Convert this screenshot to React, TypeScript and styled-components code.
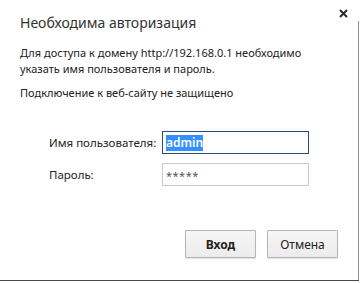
import React from 'react';
import styled, { createGlobalStyle } from 'styled-components';

const GlobalStyle = createGlobalStyle`
  html, body {
    margin: 0;
    padding: 0;
    background: #fff;
  }
  body {
    font-family: 'Noto Sans', 'Open Sans', sans-serif;
    color: #222;
  }
`;

const App: React.FC = () => {
  return (
    <>
      <GlobalStyle />
      <Dialog>
        <Header>
          <Title>Необходима авторизация</Title>
          <Close aria-label="Закрыть">
            <svg width="9" height="9" viewBox="0 0 9 9">
              <path d="M1 1L8 8M8 1L1 8" stroke="#2b2b2b" strokeWidth="2" />
            </svg>
          </Close>
        </Header>

        <Message>
          Для доступа к домену http://192.168.0.1 необходимо
          <br />
          указать имя пользователя и пароль.
        </Message>
        <Warning>Подключение к веб-сайту не защищено</Warning>

        <Form>
          <Label>Имя пользователя:</Label>
          <Field focused>
            <Selected>admin</Selected>
          </Field>
          <Label>Пароль:</Label>
          <Field>
            <Mask>*****</Mask>
          </Field>
        </Form>

        <Actions>
          <Button primary>Вход</Button>
          <Button>Отмена</Button>
        </Actions>
      </Dialog>
    </>
  );
};

export default App;

const Dialog = styled.div`
  box-sizing: border-box;
  width: 359px;
  height: 281px;
  padding: 0 20px;
  border-bottom: 1px solid #4a4a4a;
  background: linear-gradient(to bottom, #fff 21px, #8c8c8c 21px) right top / 1px 100% no-repeat,
    #fff;
  display: flex;
  flex-direction: column;
`;

const Header = styled.div`
  display: flex;
  justify-content: space-between;
  align-items: flex-start;
`;

const Title = styled.h1`
  margin: 13px 0 0;
  font-size: 14px;
  line-height: 20px;
  font-weight: 400;
  color: #333;
`;

const Close = styled.div`
  margin: 9px -9px 0 0;
  width: 9px;
  height: 9px;
  display: flex;
`;

const Message = styled.p`
  margin: 12px 0 0;
  font-size: 11px;
  line-height: 16px;
`;

const Warning = styled.p`
  margin: 8px 0 0;
  font-size: 11px;
  line-height: 16px;
`;

const Form = styled.div`
  margin-top: 30px;
  padding-left: 29px;
  display: grid;
  grid-template-columns: 104px 147px;
  column-gap: 9px;
  row-gap: 9px;
  align-items: center;
`;

const Label = styled.label`
  font-size: 11.5px;
  color: #222;
  white-space: nowrap;
`;

const Field = styled.div<{ focused?: boolean }>`
  box-sizing: border-box;
  height: 23px;
  padding: 2px 3px;
  border: 1px solid ${(props) => (props.focused ? '#2a4a7c' : '#c9c9c9')};
  display: flex;
  align-items: ${(props) => (props.focused ? 'center' : 'flex-start')};
`;

const Selected = styled.span`
  background: #3390ff;
  color: #fff;
  font-size: 12px;
  font-weight: 600;
  line-height: 16px;
`;

const Mask = styled.span`
  color: #555;
  font-size: 11px;
  letter-spacing: 0.5px;
  margin-top: 2px;
`;

const Actions = styled.div`
  margin-top: auto;
  margin-bottom: 22px;
  margin-right: 1px;
  display: flex;
  justify-content: flex-end;
  gap: 11px;
`;

const Button = styled.button<{ primary?: boolean }>`
  box-sizing: border-box;
  width: 71px;
  height: 28px;
  border: 1px solid #b5b5b5;
  border-radius: 1px;
  background: linear-gradient(#f6f6f6, #ececec);
  box-shadow: 0 1px 1px rgba(0, 0, 0, 0.12);
  font-family: 'Noto Sans', sans-serif;
  font-size: 12px;
  font-weight: ${(props) => (props.primary ? 700 : 400)};
  color: #222;
  padding: 0;
`;
